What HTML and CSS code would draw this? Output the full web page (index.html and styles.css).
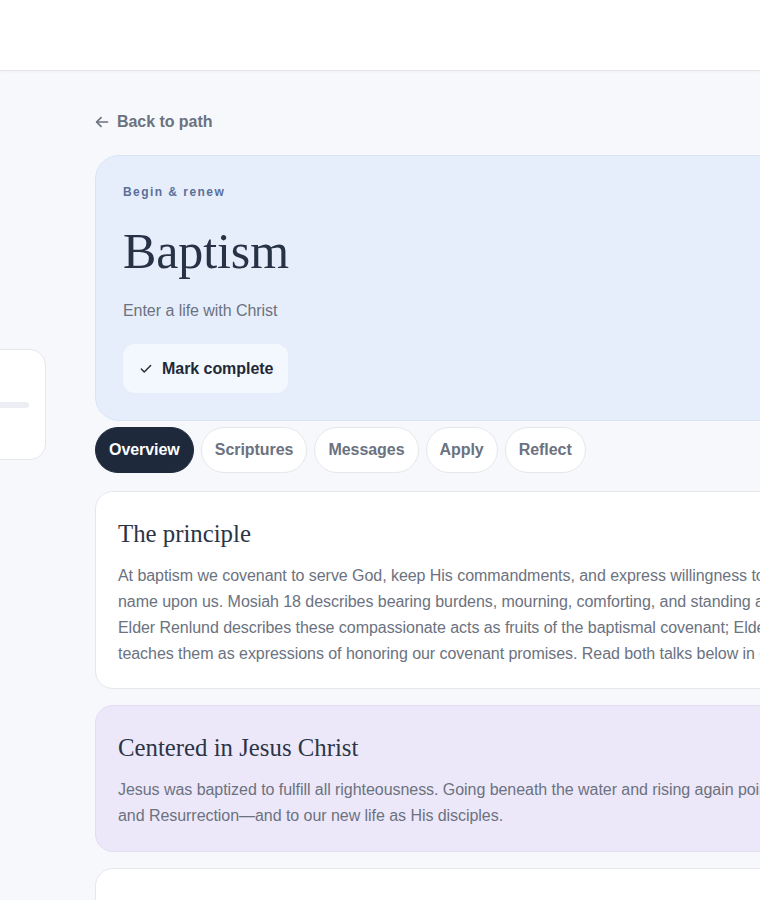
FILE: index.html
```html
<!DOCTYPE html>
<html lang="en">
<head>
<meta charset="utf-8">
<title>Baptism</title>
<link rel="stylesheet" href="styles.css">
</head>
<body>
<header class="topbar"></header>
<div class="page">
  <div class="layout">
    <aside class="sidebar">
      <div class="side-card">
        <div class="side-label">Path</div>
        <div class="track"></div>
        <div class="side-meta">0 of 6</div>
      </div>
    </aside>
    <main class="main">
      <a class="back" href="#">
        <svg class="back-icon" width="14" height="14" viewBox="0 0 14 14" fill="none" stroke="currentColor" stroke-width="1.7" stroke-linecap="round" stroke-linejoin="round"><line x1="12.5" y1="7" x2="1.8" y2="7"/><polyline points="6,2.6 1.6,7 6,11.4"/></svg>
        <span>Back to path</span>
      </a>
      <section class="hero">
        <div class="eyebrow">Begin &amp; renew</div>
        <h1 class="hero-title">Baptism</h1>
        <p class="hero-sub">Enter a life with Christ</p>
        <button class="mark-btn" type="button">
          <svg width="14" height="14" viewBox="0 0 24 24" fill="none" stroke="currentColor" stroke-width="2.4" stroke-linecap="round" stroke-linejoin="round"><polyline points="20 6 9 17 4 12"/></svg>
          <span>Mark complete</span>
        </button>
      </section>
      <nav class="tabs">
        <span class="tab tab-active">Overview</span>
        <span class="tab">Scriptures</span>
        <span class="tab">Messages</span>
        <span class="tab">Apply</span>
        <span class="tab">Reflect</span>
      </nav>
      <div class="cards">
        <section class="card">
          <h2 class="card-title">The principle</h2>
          <p class="card-text">At baptism we covenant to serve God, keep His commandments, and express willingness to take the Savior's name upon us. Mosiah 18 describes bearing burdens, mourning, comforting, and standing as witnesses of God. Elder Renlund describes these compassionate acts as fruits of the baptismal covenant; Elder Christofferson teaches them as expressions of honoring our covenant promises. Read both talks below in context.</p>
        </section>
        <section class="card card-lav">
          <h2 class="card-title">Centered in Jesus Christ</h2>
          <p class="card-text">Jesus was baptized to fulfill all righteousness. Going beneath the water and rising again points to Christ's death and Resurrection—and to our new life as His disciples.</p>
        </section>
        <section class="card card-fade">
          <h2 class="card-title">Living the covenant</h2>
          <p class="card-text">Each week the sacrament lets us renew these promises.</p>
        </section>
      </div>
    </main>
  </div>
</div>
</body>
</html>
```
FILE: styles.css
```css
html, body {
  margin: 0;
  padding: 0;
  overflow-x: hidden;
}

body {
  background: #f7f8fb;
  font-family: "Liberation Sans", Arial, sans-serif;
  letter-spacing: -0.05px;
  color: #1f2937;
}

.topbar {
  height: 70px;
  background: #ffffff;
  border-bottom: 1px solid #e3e6ec;
  box-shadow: 0 1px 3px rgba(15, 23, 42, 0.03);
}

.page {
  display: flex;
  justify-content: center;
}

.layout {
  flex-shrink: 0;
  display: grid;
  grid-template-columns: 223px 842px;
  column-gap: 49px;
  align-items: start;
  padding-top: 40px;
  padding-bottom: 40px;
}

/* Sidebar */
.sidebar {
  padding-top: 238px;
}

.side-card {
  box-sizing: border-box;
  height: 111px;
  background: #ffffff;
  border: 1px solid #e5e7eb;
  border-radius: 16px;
  padding: 16px;
}

.side-label {
  font-size: 14px;
  line-height: 22px;
  font-weight: 700;
  color: #374151;
  margin-bottom: 14px;
}

.track {
  height: 6px;
  border-radius: 3px;
  background: #eceef3;
}

.side-meta {
  margin-top: 12px;
  font-size: 13px;
  line-height: 20px;
  color: #9ca3af;
}

/* Back link */
.back {
  display: flex;
  align-items: center;
  gap: 8px;
  height: 20px;
  margin-top: 1px;
  margin-bottom: 23px;
  color: #6b7280;
  font-size: 16px;
  font-weight: 700;
  text-decoration: none;
}

.back-icon {
  flex-shrink: 0;
}

/* Hero */
.hero {
  background: #e7eefb;
  border: 1px solid #dbe4f4;
  border-radius: 24px;
  padding: 28px 27px 27px;
}

.eyebrow {
  font-size: 12px;
  line-height: 16px;
  font-weight: 700;
  letter-spacing: 1.45px;
  color: #5a7099;
  margin-bottom: 24px;
}

.hero-title {
  margin: 0 0 20px;
  font-family: "Liberation Serif", "Times New Roman", serif;
  font-weight: 400;
  font-size: 50px;
  line-height: 55px;
  letter-spacing: -0.1px;
  color: #283246;
}

.hero-sub {
  margin: 0 0 21px;
  font-size: 16px;
  line-height: 24px;
  color: #6b7280;
}

.mark-btn {
  display: inline-flex;
  align-items: center;
  gap: 9px;
  padding: 15px 15px 15px 16px;
  border: none;
  border-radius: 12px;
  background: #f3f7fe;
  color: #1f2937;
  font-family: "Liberation Sans", Arial, sans-serif;
  font-size: 16px;
  line-height: 19px;
  font-weight: 700;
  letter-spacing: -0.05px;
  cursor: pointer;
}

/* Tabs */
.tabs {
  display: flex;
  gap: 7px;
  margin-top: 6px;
}

.tab {
  padding: 13px;
  border: 1px solid #e5e7eb;
  border-radius: 999px;
  background: #ffffff;
  color: #6b7280;
  font-size: 16px;
  line-height: 18px;
  font-weight: 700;
}

.tab-active {
  background: #1e293b;
  border-color: #1e293b;
  color: #ffffff;
}

/* Cards */
.cards {
  display: flex;
  flex-direction: column;
  gap: 16px;
  margin-top: 18px;
}

.card {
  background: #ffffff;
  border: 1px solid #e5e7eb;
  border-radius: 18px;
  padding: 25px 22px 21px;
}

.card-lav {
  background: #ede8f9;
  border-color: #e3ddf3;
  padding-bottom: 22px;
}

.card-title {
  margin: 0 0 12px;
  font-family: "Liberation Serif", "Times New Roman", serif;
  font-weight: 400;
  font-size: 24.8px;
  line-height: 34px;
  letter-spacing: 0;
  color: #2b3445;
}

.card-text {
  margin: 0;
  font-size: 16px;
  line-height: 26px;
  color: #6b7280;
}

.card-fade .card-title,
.card-fade .card-text {
  color: #eef0f4;
}
```
